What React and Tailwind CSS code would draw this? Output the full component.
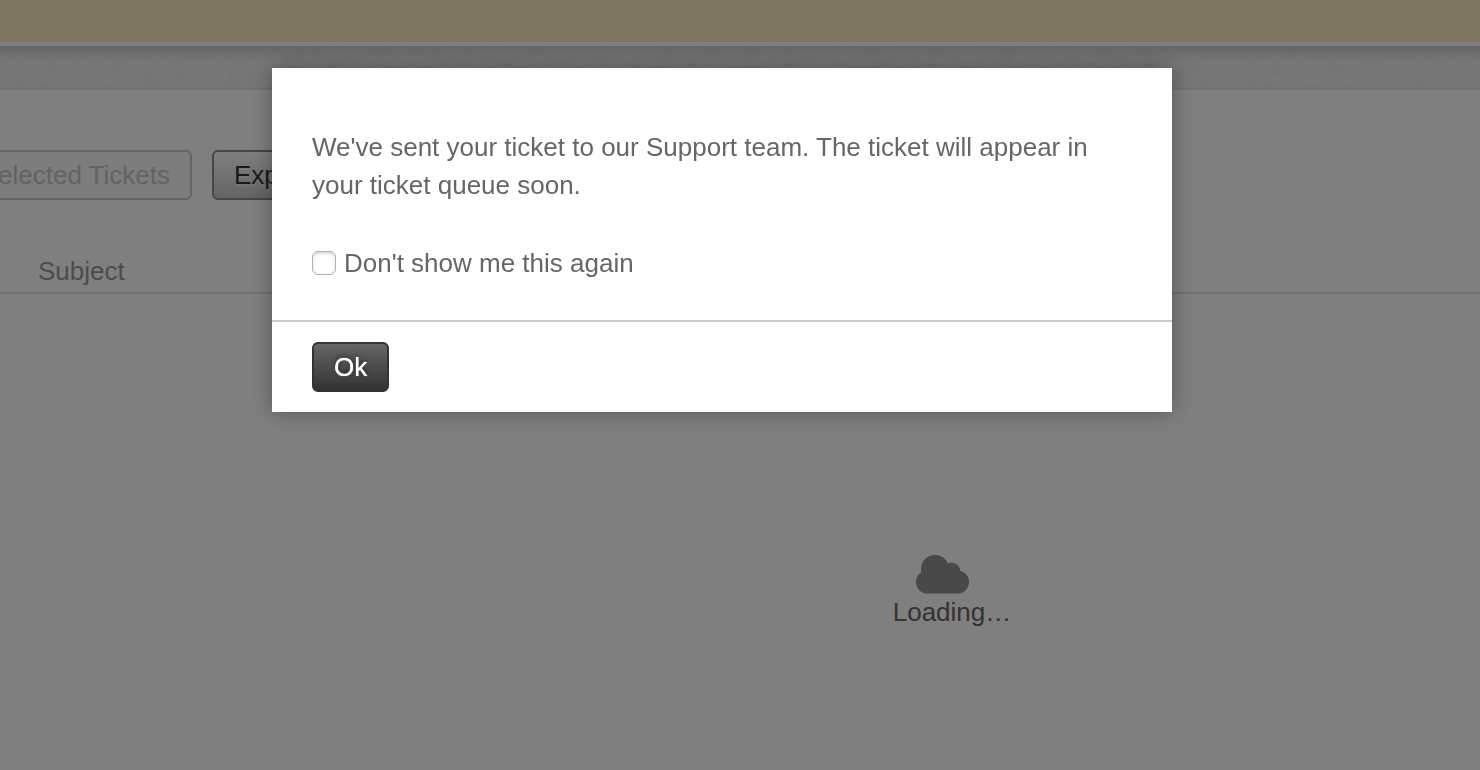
function CloudIcon() {
  return (
    <svg viewBox="0 0 54 40" className="mr-5 h-10 w-[54px]" fill="#919191" aria-hidden="true">
      <circle cx="20" cy="15" r="14" />
      <circle cx="36" cy="18" r="9.5" />
      <path d="M12.5 16.500h30a11.500 11.500 0 0 1 0 23H12.500a11.500 11.500 0 0 1 0-23z" />
    </svg>
  );
}

function HeaderTexture() {
  return (
    <svg className="absolute inset-0 h-full w-full opacity-10" aria-hidden="true">
      <filter id="grain">
        <feTurbulence type="fractalNoise" baseFrequency="0.07 0.1" numOctaves="3" />
        <feColorMatrix type="saturate" values="0" />
      </filter>
      <rect width="100%" height="100%" filter="url(#grain)" />
    </svg>
  );
}

function TicketsPage() {
  return (
    <div className="flex min-h-screen flex-col overflow-hidden bg-white">
      <div className="h-[42px] bg-[#ffedc6]" />
      <div className="h-1 bg-white" />
      <header className="relative h-11 bg-[#f0f0f0]">
        <HeaderTexture />
        <div className="absolute inset-x-0 top-0 h-4 bg-linear-to-b from-black/15 to-transparent" />
        <div className="absolute inset-x-0 bottom-0 h-1 bg-linear-to-t from-black/5 to-transparent" />
      </header>
      <main className="flex flex-1 flex-col pt-[60px]">
        <div className="flex gap-5">
          <div className="flex w-48 justify-end">
            <button
              type="button"
              disabled
              className="h-[50px] shrink-0 rounded-md border-2 border-[#cacaca] bg-[#fafafa] px-5 whitespace-nowrap text-[#c6c6c6]"
            >
              Selected Tickets
            </button>
          </div>
          <button
            type="button"
            className="h-[50px] rounded-md border-2 border-[#8c8c8c] bg-linear-to-b from-white to-[#c8c8c8] px-5 text-[#333] text-shadow-[0_2px_2px_rgb(255_255_255/0.6)]"
          >
            Export
          </button>
        </div>
        <table className="mt-10 w-full">
          <thead>
            <tr className="border-b-2 border-[#e2e2e2]">
              <th className="h-[53px] pt-[10px] pb-0 pl-[38px] text-left font-normal text-[#999]">
                Subject
              </th>
            </tr>
          </thead>
        </table>
        <div className="flex flex-col items-center pt-[260px] pl-[424px]" role="status">
          <CloudIcon />
          <span className="leading-9 text-[#666]">Loading…</span>
        </div>
      </main>
    </div>
  );
}

function TicketSentDialog() {
  return (
    <div className="fixed inset-0 flex items-start justify-center bg-black/50 pt-[68px] pr-9">
      <div
        role="dialog"
        aria-modal="true"
        aria-describedby="ticket-sent"
        className="w-full max-w-[900px] bg-white text-[#666] shadow-[0_0_20px_rgb(0_0_0/0.35)]"
      >
        <div className="px-10 pt-[60px] pb-[38px]">
          <p id="ticket-sent" className="leading-[38px]">
            We've sent your ticket to our Support team. The ticket will appear in your ticket queue
            soon.
          </p>
          <label className="mt-10 flex items-center gap-2 leading-[38px]">
            <input
              type="checkbox"
              className="size-6 appearance-none rounded-md border border-[#b0b0b0] bg-white shadow-[inset_0_2px_3px_rgb(0_0_0/0.15)] checked:bg-[#666]"
            />
            Don't show me this again
          </label>
        </div>
        <div className="border-t-2 border-[#ccc] px-10 py-5">
          <button
            type="button"
            className="block h-[50px] rounded-md border-2 border-[#333] bg-linear-to-b from-[#666] to-[#333] px-5 text-white text-shadow-[0_0_1px_white,0_-2px_4px_rgb(0_0_0/0.5)]"
          >
            Ok
          </button>
        </div>
      </div>
    </div>
  );
}

export default function App() {
  return (
    <div className="font-['Liberation_Sans',Arial,sans-serif] text-[26px]">
      <TicketsPage />
      <TicketSentDialog />
    </div>
  );
}
